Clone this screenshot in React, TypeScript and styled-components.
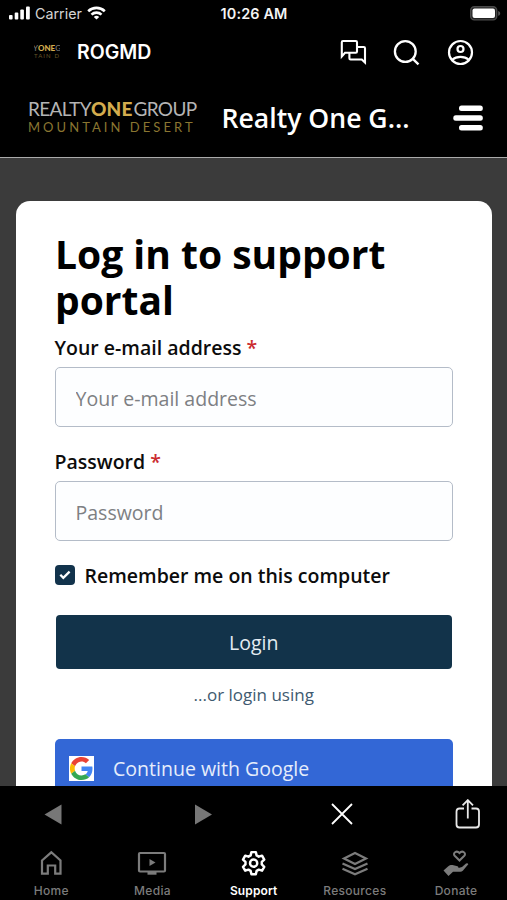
import React from 'react';
import styled, { createGlobalStyle } from 'styled-components';

const GlobalStyle = createGlobalStyle`
  * { box-sizing: border-box; }
  html, body { margin: 0; padding: 0; background: #000; }
  body { font-family: 'Open Sans', sans-serif; overflow: hidden; }
  svg { display: block; flex: none; }
  button, input { font: inherit; }
`;

const Screen = styled.div`
  width: 507px;
  height: 900px;
  display: flex;
  flex-direction: column;
  background: #000;
  overflow: hidden;
`;

const StatusBar = styled.div`
  flex: none;
  height: 28px;
  padding: 0 6px 2px 9px;
  display: grid;
  grid-template-columns: 1fr auto 1fr;
  align-items: center;
  color: #f4f4f4;
  font-family: Inter, sans-serif;
  font-size: 14.3px;
`;

const Carrier = styled.div`
  display: flex;
  align-items: center;
  gap: 5px;
  color: #d4d4d4;
`;

const Clock = styled.div`
  font-weight: 600;
  font-size: 14.4px;
  letter-spacing: 0.15px;
  margin-right: 2px;
`;

const BatteryArea = styled.div`
  justify-self: end;
`;

const AppBar = styled.header`
  flex: none;
  height: 48px;
  padding: 0 33px 0 34px;
  display: flex;
  align-items: center;
`;

const MiniLogo = styled.div`
  width: 26px;
  height: 16px;
  overflow: hidden;
  display: flex;
  flex-direction: column;
  align-items: center;
  font-family: Lato, sans-serif;
  font-size: 8px;
  line-height: 8px;
  white-space: nowrap;
  color: #858585;
`;

const MiniSub = styled.span`
  font-size: 6px;
  line-height: 8px;
  letter-spacing: 1.1px;
  color: #665527;
`;

const AppTitle = styled.div`
  margin-left: 17px;
  flex: 1;
  color: #fff;
  font-family: Inter, sans-serif;
  font-weight: 600;
  font-size: 19.5px;
`;

const Actions = styled.div`
  display: flex;
  align-items: center;
  gap: 26px;
`;

const PortalHeader = styled.header`
  flex: none;
  height: 82px;
  padding: 2px 24px 0 28px;
  display: flex;
  align-items: center;
  border-bottom: 1px solid #aaa;
`;

const Logo = styled.div`
  width: 193.5px;
  font-family: Lato, sans-serif;
  white-space: nowrap;
`;

const LogoTop = styled.div`
  font-size: 19px;
  line-height: 19px;
  letter-spacing: -0.65px;
  color: #b4b4b4;
`;

const Gold = styled.b`
  color: #d3ac4e;
  font-weight: 900;
`;

const LogoGold = styled(Gold)`
  letter-spacing: 0.2px;
  margin-right: 1px;
`;

const LogoSub = styled.div`
  font-size: 13px;
  line-height: 18px;
  letter-spacing: 3.05px;
  color: #8a7631;
`;

const PortalTitle = styled.div`
  flex: 1;
  color: #fff;
  font-weight: 600;
  font-size: 26.6px;
  line-height: 36px;
  white-space: nowrap;
`;

const Page = styled.main`
  flex: 1;
  min-height: 0;
  overflow: hidden;
  background: #3b3b3b;
  padding: 43px 15px 0 15.5px;
`;

const Card = styled.form`
  height: 700px;
  border-radius: 14px;
  background: #fff;
  padding: 30px 39px 0 39px;
`;

const Heading = styled.h1`
  margin: 0 0 1px 0.5px;
  font-size: 39px;
  line-height: 46px;
  font-weight: 700;
  color: #000;
`;

const Field = styled.div`
  height: 114px;
`;

const Label = styled.label`
  display: block;
  height: 43px;
  line-height: 48px;
  font-size: 19.5px;
  font-weight: 600;
  color: #0c0c0c;
  white-space: nowrap;
`;

const Required = styled.span`
  color: #cb2c30;
`;

const TextInput = styled.input`
  display: block;
  width: 398.5px;
  height: 60px;
  padding: 2px 20px 0;
  border: 1px solid #b4bcc8;
  border-radius: 5px;
  background: #fdfeff;
  font-size: 19.55px;
  color: #222;
  outline: none;
  &::placeholder { color: #7d8083; opacity: 1; }
`;

const Remember = styled.label`
  display: flex;
  align-items: center;
  height: 28px;
  gap: 10px;
  margin-top: 9px;
  font-size: 19.5px;
  font-weight: 600;
  color: #0c0c0c;
  white-space: nowrap;
`;

const CheckBox = styled.span`
  width: 20px;
  height: 20px;
  border-radius: 4px;
  background: #12334c;
  display: grid;
  place-items: center;
`;

const LoginButton = styled.button`
  display: block;
  width: 396.5px;
  height: 54px;
  margin: 26px 0 0 1px;
  padding: 0;
  border: 0;
  border-radius: 4px;
  background: #12334a;
  color: #e4ecf2;
  font-size: 19.55px;
`;

const OrText = styled.div`
  height: 70px;
  line-height: 51px;
  text-align: center;
  font-size: 17px;
  color: #405a70;
`;

const GoogleButton = styled.button`
  display: flex;
  align-items: center;
  width: 398.5px;
  height: 59px;
  padding: 0 14px;
  gap: 19.5px;
  border: 0;
  border-radius: 5px;
  background: #3367d6;
  color: #e6edfb;
  font-size: 19.55px;
`;

const GoogleMark = styled.span`
  width: 25px;
  height: 25px;
  background: #fff;
  display: grid;
  place-items: center;
`;

const BrowserBar = styled.div`
  flex: none;
  height: 56px;
  padding-left: 43.5px;
  display: grid;
  grid-template-columns: 150px 137px 124px 26px;
  align-items: center;
`;

const Tabs = styled.nav`
  flex: none;
  height: 58px;
  padding-left: 0.7px;
  display: grid;
  grid-template-columns: repeat(5, 101.2px);
`;

const Tab = styled.div<{ $active?: boolean }>`
  display: flex;
  flex-direction: column;
  align-items: center;
  padding-top: 6px;
  gap: 6px;
  color: ${p => (p.$active ? '#fff' : '#7c7c7c')};
  font-family: Inter, sans-serif;
  font-size: 12px;
  font-weight: ${p => (p.$active ? 600 : 500)};
  letter-spacing: ${p => (p.$active ? '0.1px' : '0.3px')};
  line-height: 15px;
`;

export default function App() {
  return (
    <>
      <GlobalStyle />
      <Screen>
        <StatusBar>
          <Carrier>
            <svg width="21" height="14" fill="#fff">
              <rect x="0" y="9" width="3.6" height="4.5" rx="1" />
              <rect x="5.7" y="6.5" width="3.6" height="7" rx="1" />
              <rect x="11.3" y="3.5" width="3.6" height="10" rx="1" />
              <rect x="17" y="0.5" width="3.8" height="13" rx="1" />
            </svg>
            <span>Carrier</span>
            <svg width="19" height="14" viewBox="0 0 19 14" fill="none" stroke="#fff" strokeWidth="2.6">
              <path d="M1.2 5.2a12 12 0 0 1 16.6 0" />
              <path d="M4.5 8.6a7.2 7.2 0 0 1 10 0" />
              <path d="M9.5 13.6 6.8 10.9a4 4 0 0 1 5.4 0z" fill="#fff" stroke="none" />
            </svg>
          </Carrier>
          <Clock>10:26 AM</Clock>
          <BatteryArea>
            <svg width="31" height="15" viewBox="0 0 31 15">
              <rect x="0.7" y="0.7" width="26" height="13.2" rx="3.6" fill="#222" stroke="#4a4a4a" strokeWidth="1.4" />
              <rect x="2.5" y="2.5" width="22.5" height="9.6" rx="2" fill="#fff" />
              <path d="M28.2 5v4.8c1.4-.6 2-1.4 2-2.4s-.6-1.8-2-2.4" fill="#555" />
            </svg>
          </BatteryArea>
        </StatusBar>

        <AppBar>
          <MiniLogo>
            <span>Y<Gold>ONE</Gold>G</span>
            <MiniSub>TAIN D</MiniSub>
          </MiniLogo>
          <AppTitle>ROGMD</AppTitle>
          <Actions>
            <svg width="27" height="26" viewBox="0 0 27 26" fill="none" stroke="#fff" strokeWidth="2.1">
              <path d="M1.8 17.5V3.2Q1.8 2 3 2H15.8q1.2 0 1.2 1.2v9.4q0 1.2-1.2 1.2H5z" />
              <path d="M17 8H23.8q1.2 0 1.2 1.2V23.5L21.8 20.5H10.6q-1.2 0-1.2-1.2V14" />
            </svg>
            <svg width="28" height="27" viewBox="0 0 28 27" fill="none" stroke="#fff" strokeWidth="2.3">
              <circle cx="12.3" cy="12.5" r="10.4" />
              <path d="m19.8 19.8 5.7 5.5" />
            </svg>
            <svg width="27" height="27" viewBox="0 0 27 27" fill="none" stroke="#fff" strokeWidth="2.2">
              <circle cx="13.5" cy="13.5" r="11.5" />
              <circle cx="13.5" cy="10" r="3" />
              <path d="M5.2 20.8c2.2-2 4.8-3 8.3-3s6.1 1 8.3 3" />
            </svg>
          </Actions>
        </AppBar>

        <PortalHeader>
          <Logo>
            <LogoTop>REALTY<LogoGold>ONE</LogoGold>GROUP</LogoTop>
            <LogoSub>MOUNTAIN DESERT</LogoSub>
          </Logo>
          <PortalTitle>Realty One G...</PortalTitle>
          <svg width="30" height="26" fill="#fff">
            <rect x="6" y="0.5" width="23.8" height="5.5" rx="2.5" />
            <rect x="0.3" y="10.2" width="29.5" height="5.5" rx="2.5" />
            <rect x="6" y="20" width="23.8" height="5.5" rx="2.5" />
          </svg>
        </PortalHeader>

        <Page>
          <Card>
            <Heading>Log in to support portal</Heading>
            <Field>
              <Label htmlFor="email">Your e-mail address <Required>*</Required></Label>
              <TextInput id="email" placeholder="Your e-mail address" />
            </Field>
            <Field>
              <Label htmlFor="password">Password <Required>*</Required></Label>
              <TextInput id="password" type="password" placeholder="Password" />
            </Field>
            <Remember>
              <CheckBox>
                <svg width="12" height="10" viewBox="0 0 12 10" fill="none" stroke="#fff" strokeWidth="2.3">
                  <path d="m1.3 4.8 3 3L10.6 1.6" />
                </svg>
              </CheckBox>
              Remember me on this computer
            </Remember>
            <LoginButton type="button">Login</LoginButton>
            <OrText>...or login using</OrText>
            <GoogleButton type="button">
              <GoogleMark>
                <svg width="23" height="23" viewBox="0 0 48 48">
                  <path fill="#EA4335" d="M24 9.5c3.54 0 6.71 1.22 9.21 3.6l6.85-6.85C35.9 2.38 30.47 0 24 0 14.62 0 6.51 5.38 2.56 13.22l7.98 6.19C12.43 13.72 17.74 9.5 24 9.5z" />
                  <path fill="#4285F4" d="M46.98 24.55c0-1.57-.15-3.09-.38-4.55H24v9.02h12.94c-.58 2.96-2.26 5.48-4.78 7.18l7.73 6c4.51-4.18 7.09-10.36 7.09-17.65z" />
                  <path fill="#FBBC05" d="M10.53 28.59a14.5 14.5 0 0 1 0-9.18l-7.98-6.19a24 24 0 0 0 0 21.56l7.98-6.19z" />
                  <path fill="#34A853" d="M24 48c6.48 0 11.93-2.13 15.89-5.81l-7.73-6c-2.15 1.45-4.92 2.3-8.16 2.3-6.26 0-11.57-4.22-13.47-9.91l-7.98 6.19C6.51 42.62 14.62 48 24 48z" />
                </svg>
              </GoogleMark>
              Continue with Google
            </GoogleButton>
          </Card>
        </Page>

        <BrowserBar>
          <svg width="19" height="22" fill="#777"><path d="M0.5 11.5 17.5 1.5v20z" /></svg>
          <svg width="19" height="22" fill="#777"><path d="M18 11.5 1 1.5v20z" /></svg>
          <svg width="22" height="22" fill="none" stroke="#fff" strokeWidth="1.8"><path d="m1 1 20 20M21 1 1 21" /></svg>
          <svg width="26" height="31" viewBox="0 0 26 31" fill="none" stroke="#e8e8e8" strokeWidth="1.8">
            <path d="M9 9.5H4.5Q1.5 9.5 1.5 12.5v13q0 3 3 3h16.5q3 0 3-3V12.5q0-3-3-3H16.5M12.8 19.5V1.5M7.6 6.3 12.8 1.1l5.2 5.2" />
          </svg>
        </BrowserBar>

        <Tabs>
          <Tab>
            <svg width="28" height="29" viewBox="0 0 28 29" fill="none" stroke="currentColor" strokeWidth="2.2">
              <path d="M5 12.5 14.3 4.3 23.5 12.5V25.7H18.2V17.5H10.8V25.7H5z" />
            </svg>
            Home
          </Tab>
          <Tab>
            <svg width="30" height="29" viewBox="0 0 30 29" fill="none" stroke="currentColor" strokeWidth="2.2">
              <rect x="2" y="5" width="26" height="18.5" rx="1" />
              <path d="M10.5 24h9v2.7h-9z" fill="currentColor" stroke="none" />
              <path d="m12.5 11 6 3.5-6 3.5z" fill="currentColor" stroke="none" />
            </svg>
            Media
          </Tab>
          <Tab $active>
            <svg width="29" height="29" viewBox="-0.1 0 22.4 22.4" fill="none" stroke="currentColor" strokeWidth="1.9">
              <path d="M10.3 3.2h3.4l.6 2.5 1.7 1 2.5-.8 1.7 3-1.9 1.8v2l1.9 1.8-1.7 3-2.5-.8-1.7 1-.6 2.5h-3.4l-.6-2.5-1.7-1-2.5.8-1.7-3 1.9-1.8v-2L3.8 8.9l1.7-3 2.5.8 1.7-1z" strokeLinejoin="round" transform="translate(-.8 0)" />
              <circle cx="11.2" cy="11.7" r="2.8" />
            </svg>
            Support
          </Tab>
          <Tab>
            <svg width="30" height="29" viewBox="0 0 30 29" fill="none" stroke="currentColor" strokeWidth="2.2">
              <path d="M15 5 26 10.5 15 16 4 10.5z" />
              <path d="m2.5 15.5 12.5 5.5 12.5-5.5M2.5 20.8l12.5 5.5 12.5-5.5" />
            </svg>
            Resources
          </Tab>
          <Tab>
            <svg width="28" height="29" viewBox="0 0 28 29" fill="none">
              <path d="M17.5 12.5 12.7 7.8C10.3 5.3 14.5 1.8 17.5 5c3-3.2 7.2.3 4.8 2.8z" stroke="currentColor" strokeWidth="2" />
              <path d="M1.5 22.5 6 18.5c2-1.5 3.5-1.7 5.5-1.2l4 .9q1.3.5 1 1.8L20 19l4-3.5q1.8-.8 2.3.8l-5.5 6.5q-1 1-2.5 1H11L6.5 28z" fill="currentColor" />
            </svg>
            Donate
          </Tab>
        </Tabs>
      </Screen>
    </>
  );
}
